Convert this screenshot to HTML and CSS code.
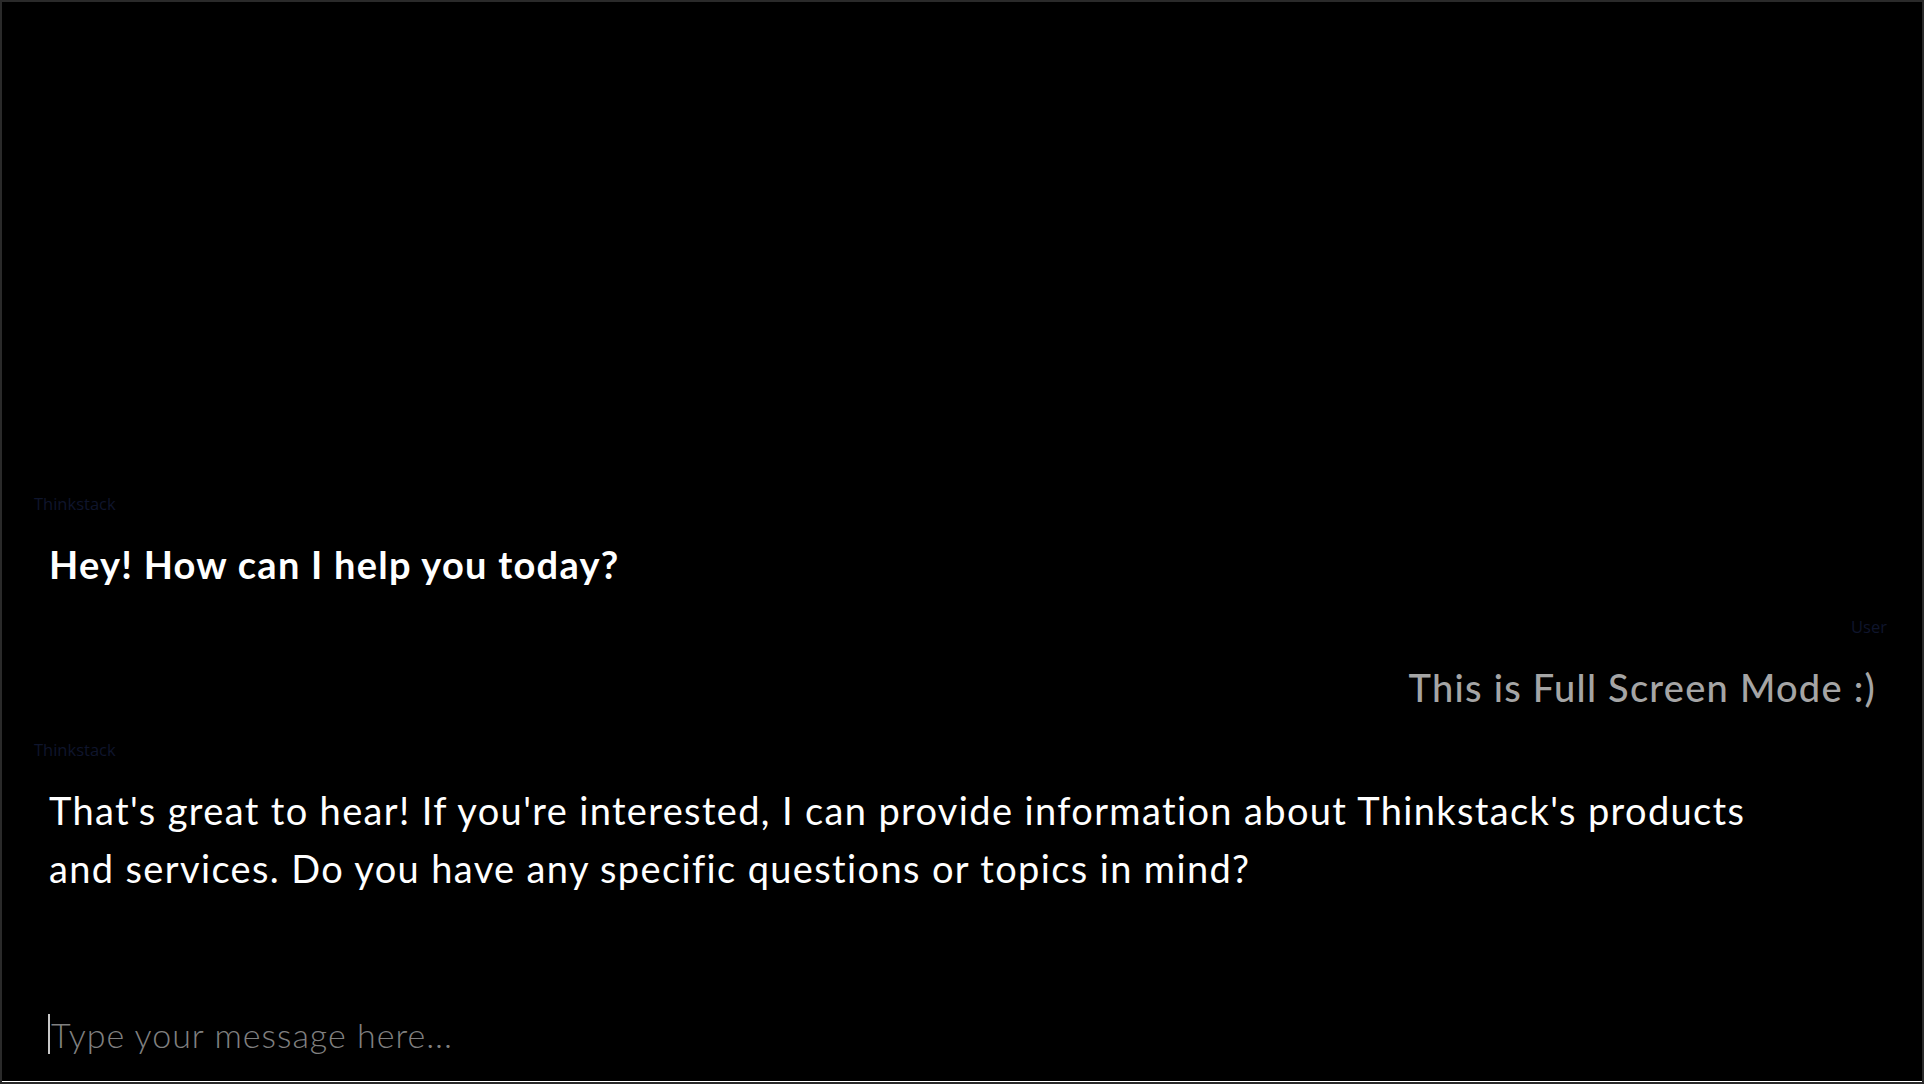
FILE: index.html
```html
<!DOCTYPE html>
<html lang="en">
<head>
<meta charset="utf-8">
<title>Thinkstack Chat</title>
<link rel="stylesheet" href="styles.css">
</head>
<body>
<div class="app">
  <main class="chat">
    <div class="msg bot">
      <div class="label">Thinkstack</div>
      <div class="bubble strong">Hey! How can I help you today?</div>
    </div>
    <div class="msg user">
      <div class="label">User</div>
      <div class="bubble">This is Full Screen Mode :)</div>
    </div>
    <div class="msg bot">
      <div class="label">Thinkstack</div>
      <div class="bubble long">That's great to hear! If you're interested, I can provide information about Thinkstack's products and services. Do you have any specific questions or topics in mind?</div>
    </div>
  </main>
  <div class="composer">
    <input class="input" type="text" placeholder="Type your message here...">
  </div>
</div>
</body>
</html>
```
FILE: styles.css
```css
html, body {
  margin: 0;
  padding: 0;
}
body {
  background: #2a2a2a;
  width: 1924px;
  height: 1084px;
  overflow: hidden;
}
.app {
  margin: 2px 2px 0 2px;
  height: 1080px;
  background: #000;
  display: flex;
  flex-direction: column;
}
.chat {
  flex: 1;
  display: flex;
  flex-direction: column;
  justify-content: flex-end;
  padding: 0 35px 60px 32px;
}
.msg {
  display: flex;
  flex-direction: column;
  margin-bottom: 24px;
}
.msg.user {
  align-items: flex-end;
}
.label {
  font-family: "Open Sans", "Noto Sans", sans-serif;
  font-size: 16.5px;
  line-height: 20px;
  color: #0f152c;
  margin-bottom: 21px;
}
.bubble {
  font-family: "Lato", "Open Sans", sans-serif;
  font-size: 38px;
  line-height: 58px;
  letter-spacing: 1.25px;
  color: #ffffff;
  max-width: 1712px;
  padding: 0 15px;
}
.bubble.long {
  letter-spacing: 1.36px;
}
.bubble.strong {
  font-weight: 700;
}
.msg.user .bubble {
  color: #a5a5a5;
  font-weight: 500;
  padding-right: 11px;
}
.composer {
  padding: 33px 34px 27px 46px;
  border-bottom: 1px solid #ffffff;
}
.input {
  display: block;
  width: 100%;
  box-sizing: border-box;
  height: 40px;
  border: none;
  border-left: 2px solid #c8c8c8;
  background: transparent;
  outline: none;
  padding: 0 0 0 1px;
  margin: 0;
  font-family: "Lato", "Open Sans", sans-serif;
  font-weight: 300;
  font-size: 34px;
  letter-spacing: 1px;
  color: #ffffff;
}
.input::placeholder {
  color: #808080;
  opacity: 1;
}
```
